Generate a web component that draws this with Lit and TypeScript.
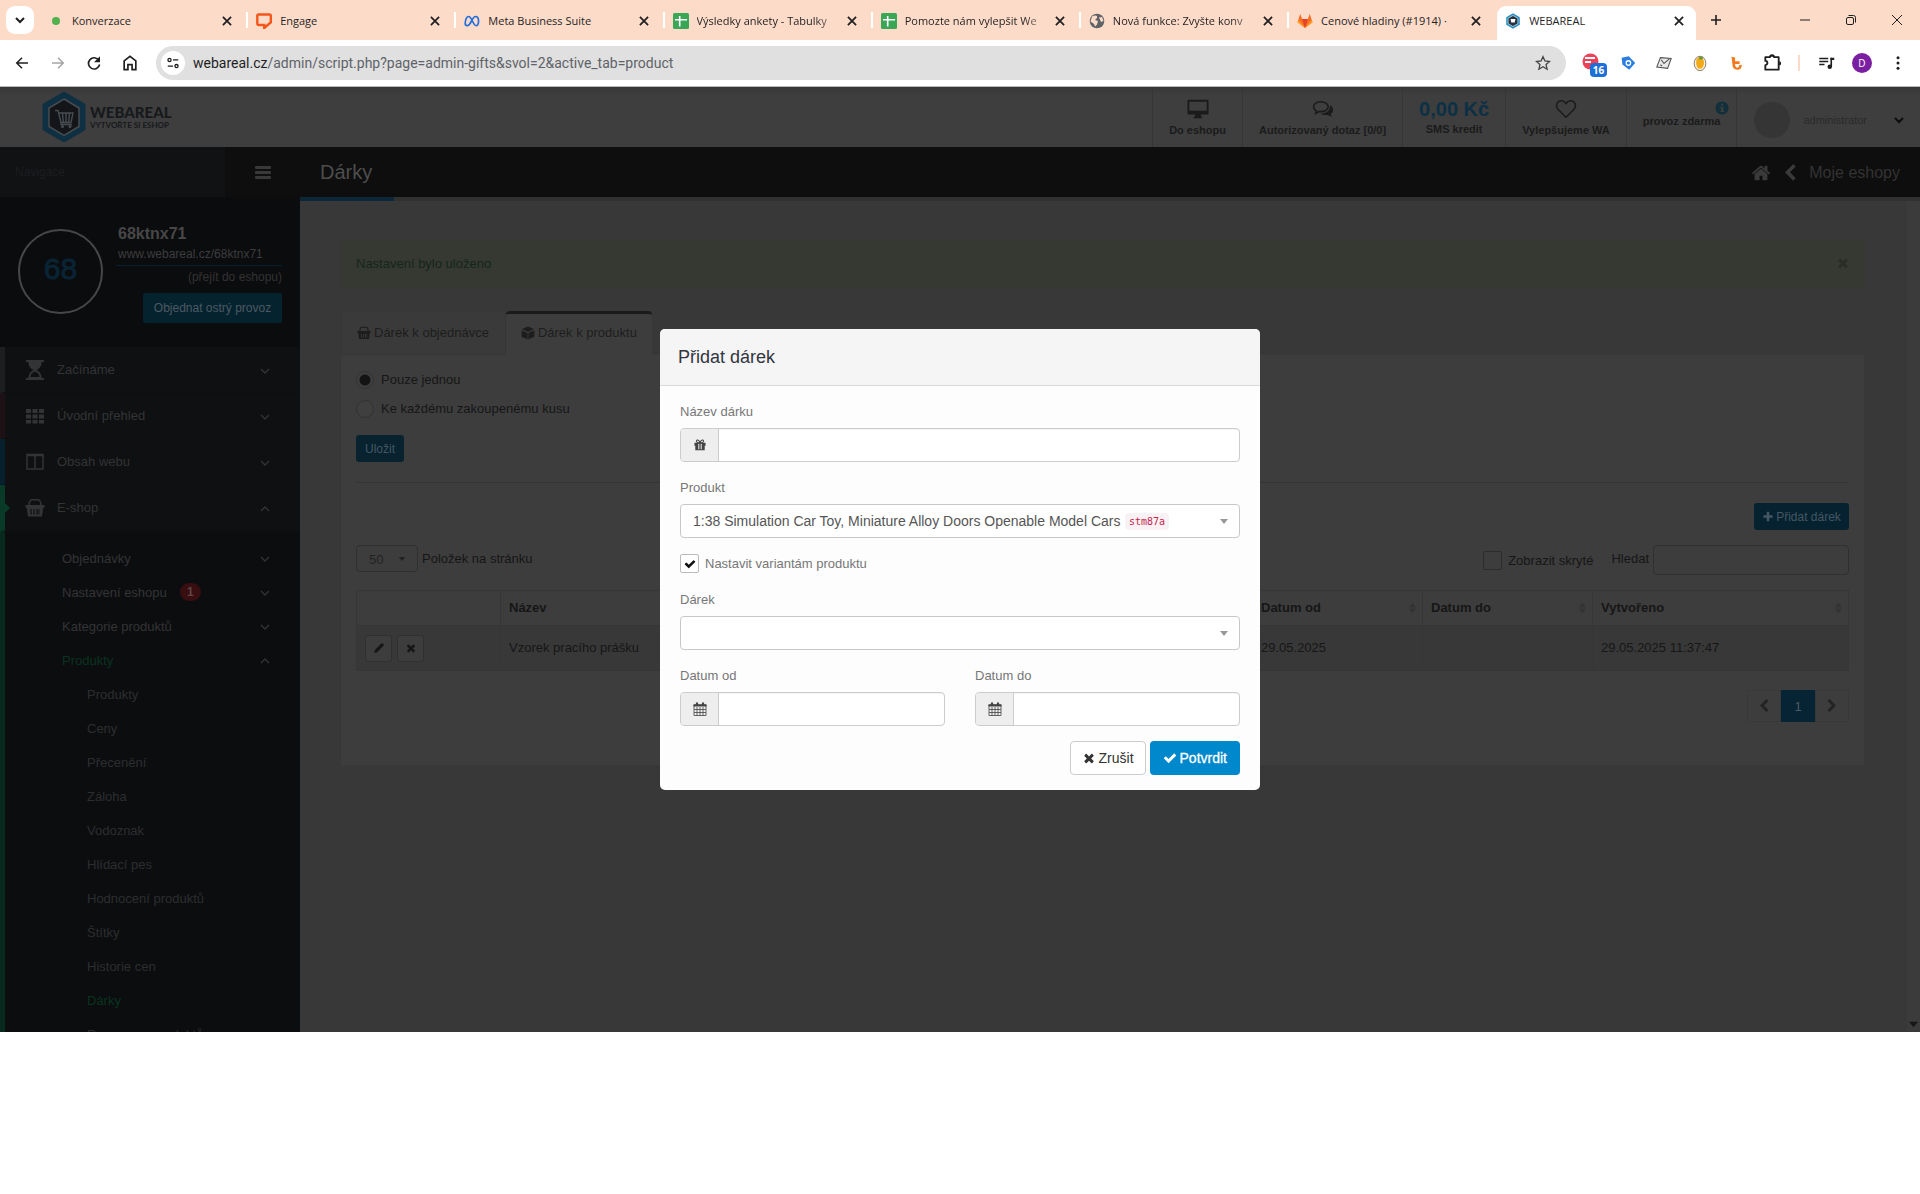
import { LitElement, html, css, svg, nothing, TemplateResult, SVGTemplateResult } from "lit";
import { customElement } from "lit/decorators.js";
import { classMap } from "lit/directives/class-map.js";

type Glyph = { box: string; body: SVGTemplateResult };

const glyphs: Record<string, Glyph> = {
  check: { box: "0 0 1792 1792", body: svg`<path d="M1671 566q0 40-28 68l-724 724-136 136q-28 28-68 28t-68-28l-136-136-362-362q-28-28-28-68t28-68l136-136q28-28 68-28t68 28l294 295 656-657q28-28 68-28t68 28l136 136q28 28 28 68z"/>` },
  times: { box: "0 0 1792 1792", body: svg`<path d="M1490 1322q0 40-28 68l-136 136q-28 28-68 28t-68-28l-294-294-294 294q-28 28-68 28t-68-28l-136-136q-28-28-28-68t28-68l294-294-294-294q-28-28-28-68t28-68l136-136q28-28 68-28t68 28l294 294 294-294q28-28 68-28t68 28l136 136q28 28 28 68t-28 68l-294 294 294 294q28 28 28 68z"/>` },
  plus: { box: "0 0 1792 1792", body: svg`<path d="M1600 736v192q0 40-28 68t-68 28h-416v416q0 40-28 68t-68 28h-192q-40 0-68-28t-28-68v-416h-416q-40 0-68-28t-28-68v-192q0-40 28-68t68-28h416v-416q0-40 28-68t68-28h192q40 0 68 28t28 68v416h416q40 0 68 28t28 68z"/>` },
  home: { box: "0 0 1792 1792", body: svg`<path d="M1472 992v480q0 26-19 45t-45 19h-384v-384h-256v384h-384q-26 0-45-19t-19-45v-480q0-1 .5-3t.5-3l575-474 575 474q1 2 1 6zm223-69l-62 74q-8 9-21 11h-3q-13 0-21-7l-692-577-692 577q-12 8-24 7-13-2-21-11l-62-74q-8-10-7-23.5t11-21.5l719-599q32-26 76-26t76 26l244 204v-195q0-14 9-23t23-9h192q14 0 23 9t9 23v408l219 182q10 8 11 21.5t-7 23.5z"/>` },
  left: { box: "0 0 1792 1792", body: svg`<path d="M1427 301l-531 531 531 531q19 19 19 45t-19 45l-166 166q-19 19-45 19t-45-19l-742-742q-19-19-19-45t19-45l742-742q19-19 45-19t45 19l166 166q19 19 19 45t-19 45z"/>` },
  right: { box: "0 0 1792 1792", body: svg`<path transform="translate(1792 0) scale(-1 1)" d="M1427 301l-531 531 531 531q19 19 19 45t-19 45l-166 166q-19 19-45 19t-45-19l-742-742q-19-19-19-45t19-45l742-742q19-19 45-19t45 19l166 166q19 19 19 45t-19 45z"/>` },
  bars: { box: "0 0 16 16", body: svg`<rect y="2" width="16" height="3" rx="1"/><rect y="7" width="16" height="3" rx="1"/><rect y="12" width="16" height="3" rx="1"/>` },
  down: { box: "0 0 12 12", body: svg`<path d="M2 5l4 4 4-4" fill="none" stroke="currentColor" stroke-width="1.3"/>` },
  up: { box: "0 0 12 12", body: svg`<path d="M2 9l4-4 4 4" fill="none" stroke="currentColor" stroke-width="1.3"/>` },
  downBold: { box: "0 0 12 12", body: svg`<path d="M2 4l4 4 4-4" fill="none" stroke="currentColor" stroke-width="2"/>` },
  close: { box: "0 0 12 12", body: svg`<path d="M2.500 2.500l7 7M9.500 2.500l-7 7" fill="none" stroke="currentColor" stroke-width="1.500"/>` },
  closeThin: { box: "0 0 12 12", body: svg`<path d="M1 1l10 10M11 1L1 11" fill="none" stroke="currentColor" stroke-width="1"/>` },
  add: { box: "0 0 12 12", body: svg`<path d="M6 1v10M1 6h10" fill="none" stroke="currentColor" stroke-width="1.6"/>` },
  minimize: { box: "0 0 12 12", body: svg`<path d="M1 6h10" stroke="currentColor"/>` },
  restore: { box: "0 0 12 12", body: svg`<g fill="none" stroke="currentColor"><rect x="1.5" y="3.5" width="7" height="7" rx="1.5"/><path d="M3.5 1.5h5q2 0 2 2v5"/></g>` },
  back: { box: "0 0 24 24", body: svg`<path d="M20 12H5M12 5l-7 7 7 7" fill="none" stroke="currentColor" stroke-width="2"/>` },
  forward: { box: "0 0 24 24", body: svg`<path d="M4 12h15M12 5l7 7-7 7" fill="none" stroke="currentColor" stroke-width="2"/>` },
  reload: { box: "0 0 24 24", body: svg`<path d="M18.500 8.500A7.500 7.500 0 1 0 19.500 14" fill="none" stroke="currentColor" stroke-width="2.200"/><path d="M20 3v8h-8z"/>` },
  house: { box: "0 0 24 24", body: svg`<path d="M5 20V9.500L12 4l7 5.500V20h-4.500v-6h-5v6z" fill="none" stroke="currentColor" stroke-width="2"/>` },
  tune: { box: "0 0 16 16", body: svg`<g fill="none" stroke="currentColor" stroke-width="1.500"><circle cx="4" cy="4.500" r="1.800"/><path d="M8 4.500h6M2 11.500h6"/><circle cx="12" cy="11.500" r="1.800"/></g>` },
  star: { box: "0 0 24 24", body: svg`<path d="M12 2.500l2.900 6.500 7 .7-5.300 4.700 1.500 6.900-6.100-3.600-6.100 3.600 1.500-6.900L2.100 9.700l7-.7z" fill="none" stroke="currentColor" stroke-width="2"/>` },
  puzzle: { box: "0 0 24 24", body: svg`<path d="M4 5h5.500a2.500 2.500 0 0 1 5 0H20v15H4v-5.500a2.300 2.300 0 0 0 0-5z" fill="none" stroke="currentColor" stroke-width="2.200" stroke-linejoin="round"/><path d="M9.500 4.500a2.500 2.500 0 0 1 5 0zM20.500 10a2.500 2.500 0 0 1 0 5z"/>` },
  queue: { box: "0 0 24 24", body: svg`<path d="M3 6h12M3 10h12M3 14h7M19 5v12" stroke="currentColor" stroke-width="2.200"/><path d="M18 5h5v3h-5z"/><circle cx="17" cy="17" r="3"/>` },
  dots: { box: "0 0 24 24", body: svg`<circle cx="12" cy="5" r="2"/><circle cx="12" cy="12" r="2"/><circle cx="12" cy="19" r="2"/>` },
  monitor: { box: "0 0 24 24", body: svg`<path d="M2 2h20q1.500 0 1.500 1.500v13q0 1.500-1.500 1.500h-7l1 3h1v1H7v-1h1l1-3H2Q.5 18 .5 16.500v-13Q.5 2 2 2zM2.500 4v10h19V4z" fill-rule="evenodd"/>` },
  chats: { box: "0 0 24 24", body: svg`<path d="M9.500 4C5 4 1.800 6.300 1.800 9.600c0 2 1.200 3.600 3 4.600L4 16.800l3.800-2c6 .6 9.900-1.900 9.900-5.200C17.700 6.300 14 4 9.500 4z" fill="none" stroke="currentColor" stroke-width="1.700"/><path d="M19.500 7.500c4.500 2.500 4.500 7.800.8 10l1.700 3.300-5-2.300c-3.200.4-6-.3-7.500-1.700 6.500 0 11-3.500 10-9.300z"/>` },
  heart: { box: "0 0 24 24", body: svg`<path d="M12 21L3.500 12.500C-.5 8 3 2.500 7.500 3 10 3.300 12 6 12 6s2-2.700 4.500-3C21 2.500 24.500 8 20.500 12.500z" fill="none" stroke="currentColor" stroke-width="1.700"/>` },
  info: { box: "0 0 16 16", body: svg`<circle cx="8" cy="8" r="7.500"/><path d="M7 3h2.500v2H7zM6 6.500h3.500V11h1v1.500H6V11h1V8H6z" fill="#3e3e3e"/>` },
  hourglass: { box: "0 0 20 20", body: svg`<path d="M1 1h18M1 19h18" stroke="currentColor" stroke-width="1.800"/><path d="M3.500 2v2q1 4 5 6-4 2-5 6v2h13v-2q-1-4-5-6 4-2 5-6V2zM5.500 17q0-4 4.500-5.500Q14.500 13 14.500 17z" fill-rule="evenodd"/>` },
  grid: { box: "0 0 20 20", body: svg`<path d="M1 3h5v4H1zM7.500 3h5v4h-5zM14 3h5v4h-5zM1 8.500h5v4H1zM7.500 8.500h5v4h-5zM14 8.500h5v4h-5zM1 14h5v3.500H1zM7.500 14h5v3.500h-5zM14 14h5v3.500h-5z"/>` },
  columns: { box: "0 0 20 20", body: svg`<path d="M2 2.500h16v14.500H2zM10 3v14M2 3.500h16" fill="none" stroke="currentColor" stroke-width="1.500"/>` },
  basket: { box: "0 0 20 20", body: svg`<path d="M4 8q0-6 3-6.200h6Q16 2 16 8" fill="none" stroke="currentColor" stroke-width="1.600"/><path d="M.5 7h19v2.800h-1.200L17 18.500H3L1.700 9.800H.5zM5.500 11v5.500h1.200V11zm3 0v5.500h1.200V11zm3 0v5.500h1.200V11zm3 0h-1v5.500h1z" fill-rule="evenodd"/>` },
  cube: { box: "0 0 16 16", body: svg`<path d="M8 .5l7 3-7 3.300-7-3.300zM.8 5l6.700 3v7.500L.8 12.300zM15.200 5v7.300l-6.700 3.200V12L12 10.300V6.500z"/><path d="M8.500 8l5-2.300v5l-5 2.200z"/>` },
  pencil: { box: "0 0 16 16", body: svg`<path d="M1.500 14.500l1-4 8.500-8.500q1-1 2 0l1 1q1 1 0 2l-8.500 8.500z"/>` },
  gift: { box: "0 0 14 14", body: svg`<path d="M.5 4.500h13V8h-1v5h-11V8h-1zM5 5.500V12h1.200V5.500zM7.800 5.500V12H9V5.500z" fill-rule="evenodd"/><path d="M7 4.500Q5.500.5 3.500 1.300 2 2.500 4 4.300zM7 4.500Q8.500.5 10.500 1.300 12 2.500 10 4.300z" fill="none" stroke="currentColor" stroke-width="1.300"/>` },
  calendar: { box: "0 0 14 14", body: svg`<path d="M.5 2.200h13v2.300H.5z"/><path d="M1 3h12v10.500H1zM1 7.500h12M1 10.500h12M4 5v8.500M7 5v8.500M10 5v8.500" fill="none" stroke="currentColor" stroke-width=".8"/><rect x="3" y=".3" width="2" height="3.200" rx="1"/><rect x="9" y=".3" width="2" height="3.200" rx="1"/>` },
  caret: { box: "0 0 8 5", body: svg`<path d="M0 0h8L4 5z"/>` },
  sort: { box: "0 0 8 14", body: svg`<path d="M0 6l4-5 4 5zM0 8h8l-4 5z"/>` },
  dot: { box: "0 0 16 16", body: svg`<circle cx="8" cy="8" r="4" fill="#4fb04c"/>` },
  engage: { box: "0 0 16 16", body: svg`<path d="M2.500 1.500h11q1.300 0 1.300 1.500v6.500L10.500 13 8.200 15.300V12H2.800Q1.300 12 1.300 10.500V3q0-1.500 1.200-1.500z" fill="none" stroke="#f3571b" stroke-width="2.400"/>` },
  meta: { box: "0 0 16 16", body: svg`<path d="M1.200 10.500C1.200 6 3 3.500 4.700 3.500 7.800 3.500 9 12.700 12.300 12.700c3 0 3.300-9.200-.8-9.200C8 3.500 7 12.700 3.300 12.700c-1.300 0-2.100-.8-2.100-2.200z" fill="none" stroke="#1f6fe0" stroke-width="1.700"/>` },
  sheets: { box: "0 0 16 16", body: svg`<rect width="16" height="16" rx="1.500" fill="#3aa757"/><path d="M6.700 3v10.500M2 6.700h12" stroke="#fff" stroke-width="1.600"/>` },
  globe: { box: "0 0 16 16", body: svg`<circle cx="8" cy="8" r="7.300" fill="#5f6368"/><path d="M3 3.500Q6 2 8 3v2L6 7l3 1-1 3.500-2 2Q5 10 1.500 8.500zM10 4.500l3-.5 1.500 4-2.500 1z" fill="#fddbc9"/>` },
  gitlab: { box: "0 0 16 16", body: svg`<path d="M8 15L.5 9.300 3.200 1l2 5h5.600l2-5 2.700 8.300z" fill="#fc6d26"/><path d="M8 15L5.200 6h5.600z" fill="#e24329"/><path d="M8 15L.5 9.300l1-2.300zM8 15l7.500-5.700-1-2.300z" fill="#fca326"/>` },
  webareal: { box: "0 0 16 16", body: svg`<path d="M8 .3l6.800 3.900v7.600L8 15.700l-6.800-3.900V4.200z" fill="#2b8fc4"/><path d="M8 2.500l4.900 2.800v5.400L8 13.500l-4.900-2.800V5.300z" fill="#26323c" stroke="#d6eaf4" stroke-width=".7"/><path d="M5.500 6h5l-.8 3.500H6.300z" fill="#fff"/>` },
  block: { box: "0 0 20 20", body: svg`<circle cx="8.500" cy="8.500" r="8" fill="#ee4056"/><path d="M3 5h10M3 9h6" stroke="#fff" stroke-width="2"/>` },
  tag: { box: "0 0 20 20", body: svg`<path d="M2 3.500l9-2 8 8.500-7.500 8.500L3 12z" fill="#2b7de1"/><circle cx="10.500" cy="10" r="2.800" fill="none" stroke="#fff" stroke-width="1.600"/>` },
  envelope: { box: "0 0 20 20", body: svg`<path d="M6 4l12 1-4 11-12-1.500z" fill="#e9e9e9" stroke="#555" stroke-width="1.200"/><path d="M7 6.500l3 4 6-5M6 12l2 1.500" fill="none" stroke="#555" stroke-width="1.200"/>` },
  mango: { box: "0 0 20 20", body: svg`<ellipse cx="10" cy="10.500" rx="6.500" ry="8" fill="#f6efdf" stroke="#8a6d52"/><path d="M6 6q3-5 7-1 3 5 0 10-4 3-6 0-2-4-1-9z" fill="#f3aa18"/><path d="M9 3h4v3H9z" fill="#5b9d34"/>` },
  tool: { box: "0 0 20 20", body: svg`<path d="M5 3l4 1v4h5v3H9q0 4 2.500 4 2 0 2-2.500l3-.5q0 5.500-5 5.500-5.500 0-5.500-6z" fill="#f47a20"/>` },
};

const icon = (name: string, cls = ""): TemplateResult => {
  const g = glyphs[name];
  return html`<svg class="ico ${cls}" viewBox=${g.box} fill="currentColor" aria-hidden="true">${g.body}</svg>`;
};

const browserTabs = [
  { icon: "dot", title: "Konverzace" },
  { icon: "engage", title: "Engage" },
  { icon: "meta", title: "Meta Business Suite" },
  { icon: "sheets", title: "Výsledky ankety - Tabulky", fade: true },
  { icon: "sheets", title: "Pomozte nám vylepšit We", fade: true },
  { icon: "globe", title: "Nová funkce: Zvyšte konv", fade: true },
  { icon: "gitlab", title: "Cenové hladiny (#1914) ·" },
  { icon: "webareal", title: "WEBAREAL", active: true },
];

const mainMenu = [
  { icon: "hourglass", label: "Začínáme", tone: "grey" },
  { icon: "grid", label: "Úvodní přehled", tone: "red" },
  { icon: "columns", label: "Obsah webu", tone: "blue" },
  { icon: "basket", label: "E-shop", tone: "green", open: true },
];

const shopMenu = [
  { label: "Objednávky" },
  { label: "Nastavení eshopu", badge: "1" },
  { label: "Kategorie produktů" },
  { label: "Produkty", open: true },
];

const productMenu = ["Produkty", "Ceny", "Přecenění", "Záloha", "Vodoznak", "Hlídací pes", "Hodnocení produktů", "Štítky", "Historie cen", "Dárky", "Rezervace produktů"];

const shared = css`
  * { box-sizing: border-box; }
  :host { display: block; font-family: "Liberation Sans", Arial, sans-serif; font-size: 13px; }
  button, input, select { font: inherit; color: inherit; margin: 0; }
  button { border: 0; background: none; padding: 0; display: inline-flex; align-items: center; justify-content: center; }
  a { color: inherit; text-decoration: none; }
  .ico { display: block; width: 16px; height: 16px; flex: none; }
  .i12 { width: 12px; height: 12px; }
  .i14 { width: 14px; height: 14px; }
  .i18 { width: 18px; height: 18px; }
  .i20 { width: 20px; height: 20px; }
  .i22 { width: 22px; height: 22px; }
`;

@customElement("browser-chrome")
class BrowserChrome extends LitElement {
  static styles = [shared, css`
    :host { font-family: "Open Sans", "Noto Sans", sans-serif; font-size: 12px; color: #1f1f1f; }
    .strip { display: flex; height: 40px; padding: 6px 0 0 6px; background: #fddbc9; }
    .search { width: 28px; height: 28px; border-radius: 9px; background: #fff; margin-right: 6px; }
    .tabs { display: flex; flex: 0 1 1656px; min-width: 0; }
    .tab { flex: 208 1 0; min-width: 0; display: flex; align-items: center; gap: 8px; padding: 0 14px 5px 8px; height: 34px; position: relative; }
    .tab + .tab::before { content: ""; position: absolute; left: -2px; top: 6px; width: 2px; height: 16px; background: #fff; }
    .tab.active { flex-grow: 202; padding-right: 10px; background: #fff; border-radius: 9px 9px 0 0; }
    .tab.active::before { display: none; }
    .title { flex: 1; min-width: 0; font-size: 11px; line-height: 16px; white-space: nowrap; padding-top: 1px; }
    .fade { mask-image: linear-gradient(to right, #000 84%, #0005); }
    .plus { width: 32px; height: 28px; margin-left: 4px; }
    .controls { margin-left: auto; display: flex; }
    .controls button { width: 46px; height: 28px; }
    .bar { display: flex; align-items: center; height: 47px; padding: 0 10px; background: #fff; border-bottom: 1px solid #b9b9b9; }
    .nav { display: flex; gap: 12px; margin-right: 14px; }
    .nav button { width: 24px; height: 24px; }
    .dim { color: #a5a5a5; }
    .omni { flex: 1; display: flex; align-items: center; height: 34px; border-radius: 17px; background: #e0e0e0; padding: 0 15px 0 5px; gap: 8px; }
    .tune { width: 24px; height: 24px; border-radius: 50%; background: #fff; }
    .address { flex: 1; font-family: Roboto, "Open Sans", sans-serif; font-size: 14px; line-height: 20px; color: #5f6368; white-space: nowrap; }
    .address b { font-weight: 400; color: #1f1f1f; }
    .star { color: #444; }
    .exts { display: flex; align-items: center; gap: 12px; margin-left: 14px; }
    .exts button { width: 24px; height: 24px; position: relative; }
    .count { position: absolute; left: 10px; top: 12px; width: 17px; height: 14px; border-radius: 4px; background: #1d6fd8; color: #fff; font-size: 10px; font-weight: 700; line-height: 14px; text-align: center; }
    .sep { width: 2px; height: 16px; background: #fddbc9; margin: 0 2px; }
    .me { width: 20px; height: 20px; border-radius: 50%; background: #7b1fa2; color: #fff; font-size: 10px; line-height: 20px; }
  `];

  render() {
    return html`
      <div class="strip">
        <button class="search" aria-label="Hledat karty">${icon("downBold", "i12")}</button>
        <div class="tabs">
          ${browserTabs.map(t => html`
            <div class=${classMap({ tab: true, active: !!t.active })}>
              ${icon(t.icon)}<span class=${classMap({ title: true, fade: !!t.fade })}>${t.title}</span>
              <button aria-label="Zavřít kartu">${icon("close", "i14")}</button>
            </div>`)}
        </div>
        <button class="plus" aria-label="Nová karta">${icon("add", "i12")}</button>
        <div class="controls">
          <button aria-label="Minimalizovat">${icon("minimize", "i12")}</button>
          <button aria-label="Obnovit">${icon("restore", "i12")}</button>
          <button aria-label="Zavřít">${icon("closeThin", "i12")}</button>
        </div>
      </div>
      <div class="bar">
        <div class="nav">
          <button aria-label="Zpět">${icon("back", "i18")}</button>
          <button class="dim" aria-label="Vpřed">${icon("forward", "i18")}</button>
          <button aria-label="Znovu načíst">${icon("reload", "i18")}</button>
          <button aria-label="Domů">${icon("house", "i20")}</button>
        </div>
        <div class="omni">
          <button class="tune" aria-label="Informace o webu">${icon("tune", "i14")}</button>
          <span class="address"><b>webareal.cz</b>/admin/script.php?page=admin-gifts&amp;svol=2&amp;active_tab=product</span>
          <button class="star" aria-label="Přidat záložku">${icon("star")}</button>
        </div>
        <div class="exts">
          <button aria-label="Blokování">${icon("block", "i20")}<span class="count">16</span></button>
          <button aria-label="Štítek">${icon("tag")}</button>
          <button aria-label="Pošta">${icon("envelope", "i18")}</button>
          <button aria-label="Mango">${icon("mango", "i18")}</button>
          <button aria-label="Nástroj">${icon("tool", "i18")}</button>
          <button aria-label="Rozšíření">${icon("puzzle", "i20")}</button>
          <span class="sep"></span>
          <button aria-label="Média">${icon("queue", "i18")}</button>
          <button aria-label="Profil"><span class="me">D</span></button>
          <button aria-label="Nabídka">${icon("dots", "i18")}</button>
        </div>
      </div>`;
  }
}

@customElement("shop-header")
class ShopHeader extends LitElement {
  static styles = [shared, css`
    header { display: flex; height: 60px; background: linear-gradient(#373737, #3e3e3e 8px); color: #161616; padding-left: 41px; }
    .logo { display: flex; align-items: center; gap: 3px; }
    .hex { width: 46px; height: 52px; }
    .brand { display: flex; flex-direction: column; font-family: Lato, sans-serif; color: #17191c; font-weight: 900; }
    .name { font-size: 15px; line-height: 16px; }
    .claim { font-size: 8px; line-height: 10px; font-weight: 700; }
    .cells { margin-left: auto; display: flex; font-size: 11px; font-weight: 700; color: #1b1b1b; }
    .cell { display: flex; flex-direction: column; align-items: center; justify-content: center; gap: 3px; padding: 1px 16px 0; border-left: 1px solid #363636; line-height: 14px; }
    .cell.wide { padding: 0 16px; gap: 2px; }
    .money { font-size: 20px; line-height: 22px; color: #0c3045; }
    .free { position: relative; padding-top: 7px; }
    .free .ico { position: absolute; right: 7px; top: 14px; color: #12303c; }
    .user { display: flex; align-items: center; gap: 13px; padding: 5px 15px 0 17px; border-left: 1px solid #363636; font-weight: 400; color: #2a2a2a; }
    .avatar { width: 36px; height: 36px; border-radius: 50%; background: #353535; }
    .user .ico { margin-left: 13px; color: #0c0c0c; }
  `];

  render() {
    return html`
      <header>
        <a class="logo" href="#">
          <svg class="hex" viewBox="0 0 46 52" aria-hidden="true">
            <path d="M23 1.500l20.500 12v25L23 50.500 2.500 38.500v-25z" fill="#0e3042" stroke="#0e3042" stroke-width="2" stroke-linejoin="round"/>
            <path d="M23 8l15 9v18.500L23 44.500 8 35.500V17z" fill="#131518" stroke="#484c50" stroke-width="1.500"/>
            <g fill="none" stroke="#484c50" stroke-width="1.400"><path d="M14 19.500h3l3 12h10l2-9.500H18M21.500 22l.8 9M25 22v9M28.500 22l-.8 9M20 31.500v2h11"/></g>
            <circle cx="21.500" cy="35.500" r="1.500" fill="#484c50"/><circle cx="29" cy="35.500" r="1.500" fill="#484c50"/>
          </svg>
          <span class="brand"><span class="name">WEBAREAL</span><span class="claim">VYTVOŘTE SI ESHOP</span></span>
        </a>
        <nav class="cells">
          <a class="cell" href="#">${icon("monitor", "i22")}Do eshopu</a>
          <a class="cell" href="#">${icon("chats", "i22")}Autorizovaný dotaz [0/0]</a>
          <a class="cell wide" href="#"><span class="money">0,00 Kč</span>SMS kredit</a>
          <a class="cell" href="#">${icon("heart", "i22")}Vylepšujeme WA</a>
          <a class="cell free" href="#">provoz zdarma${icon("info", "i14")}</a>
          <a class="user" href="#"><span class="avatar"></span>administrator${icon("downBold", "i12")}</a>
        </nav>
      </header>`;
  }
}

@customElement("shop-sidebar")
class ShopSidebar extends LitElement {
  static styles = [shared, css`
    :host { background: #0f1012; color: #333435; overflow: hidden; }
    .top { display: flex; height: 50px; background: #111214; }
    .top span { flex: 1; padding: 18px 15px 0; font-size: 12px; line-height: 14px; color: #1c1e20; }
    .top button { width: 75px; background: #0e0e0f; color: #393939; }
    .profile { display: flex; justify-content: space-between; padding: 27px 18px 24px; height: 150px; background: #0b0c0e; }
    .ring { width: 85px; height: 85px; margin-top: 5px; border: 2px solid #474747; border-radius: 50%; color: #092435; font-size: 30px; line-height: 76px; text-align: center; -webkit-text-stroke: 1px #092435; }
    .who { display: flex; flex-direction: column; width: 166px; color: #3d3d3d; font-size: 12px; margin-top: 1px; }
    .who strong { font-size: 16px; line-height: 18px; color: #474747; margin-left: 2px; }
    .who a { padding: 4px 0 4px 2px; line-height: 14px; border-bottom: 1px solid #06202d; }
    .who small { font-size: 12px; line-height: 14px; text-align: right; padding: 4px 0 9px; color: #333; }
    .who button { align-self: flex-end; width: 139px; height: 30px; flex: none; border-radius: 2px; background: #05222f; color: #4c5a62; }
    ul { list-style: none; margin: 0; padding: 0; }
    .main > li { height: 46px; display: flex; align-items: center; padding: 0 29px 0 20px; border-left: 5px solid; border-bottom: 1px solid #0d0e10; position: relative; }
    .main > li span { flex: 1; padding-left: 12px; line-height: 16px; }
    .main .grey { border-left-color: #1c1e20; }
    .main .red { border-left-color: #1e1115; }
    .main .blue { border-left-color: #07202d; }
    .main .green { border-left-color: #093a27; height: 47px; }
    .green::before { content: ""; position: absolute; left: 0; top: 18px; border: 5px solid transparent; border-left-color: #093a27; }
    .shop { padding-top: 9px; border-left: 5px solid #08291d; background: #0c0d0f; }
    .shop li { display: flex; align-items: center; height: 34px; padding: 0 29px 0 57px; }
    .shop .leaf { padding-left: 82px; color: #2c2d2f; }
    .shop .ico { margin-left: auto; }
    .badge { margin-left: 13px; width: 21px; height: 18px; border-radius: 9px; background: #390e10; color: #5c4647; font-size: 12px; font-weight: 700; line-height: 18px; text-align: center; }
    .shop .on { color: #09331f; }
  `];

  render() {
    return html`
      <div class="top"><span>Navigace</span><button aria-label="Nabídka">${icon("bars")}</button></div>
      <div class="profile">
        <div class="ring">68</div>
        <div class="who">
          <strong>68ktnx71</strong>
          <a href="#">www.webareal.cz/68ktnx71</a>
          <small>(přejít do eshopu)</small>
          <button>Objednat ostrý provoz</button>
        </div>
      </div>
      <ul class="main">
        ${mainMenu.map(m => html`<li class=${m.tone}>${icon(m.icon, "i20")}<span>${m.label}</span>${icon(m.open ? "up" : "down", "i12")}</li>`)}
      </ul>
      <ul class="shop">
        ${shopMenu.map(m => html`<li><span class=${m.open ? "on" : ""}>${m.label}</span>${m.badge ? html`<b class="badge">${m.badge}</b>` : nothing}${icon(m.open ? "up" : "down", "i12")}</li>`)}
        ${productMenu.map(p => html`<li class="leaf"><a class=${p === "Dárky" ? "on" : ""} href="#">${p}</a></li>`)}
      </ul>`;
  }
}

@customElement("gift-list")
class GiftList extends LitElement {
  static styles = [shared, css`
    :host { background: #383838; color: #161616; overflow: hidden; }
    .title { display: flex; align-items: center; height: 50px; padding: 0 20px; background: #0e0e0e; color: #404040; }
    h1 { margin: 0; font-size: 20px; font-weight: 400; line-height: 24px; color: #4d4d4d; }
    .crumbs { margin-left: auto; display: flex; align-items: center; gap: 10px; padding-top: 2px; font-size: 16px; color: #333; }
    .crumbs .ico { color: #3a3a3a; }
    .progress { height: 4px; background: #313131; }
    .progress i { display: block; width: 94px; height: 4px; background: #0c2838; }
    .body { display: flex; min-height: 830px; }
    .content { flex: 1; min-width: 0; padding: 39px 42px 0 41px; }
    .alert { display: flex; align-items: center; justify-content: space-between; height: 48px; padding: 0 15px 2px; background: #363932; color: #142619; }
    .alert button { color: #2a2c28; }
    .tabs { display: flex; align-items: flex-end; margin-top: 23px; }
    .tabs button { gap: 3px; height: 43px; padding: 0 16px 2px 15px; background: #3a3a3a; border: 1px solid #353535; border-top-color: #393939; color: #1d1d1d; }
    .tabs button.on { height: 44px; border: 0; border-top: 3px solid #1a1a1a; border-radius: 4px 4px 0 0; background: #3d3d3d; padding: 0 15px 4px; }
    .panel { background: #3d3d3d; height: 410px; padding: 10px 15px 0; border-right: 1px solid #393939; }
    .radio { display: flex; align-items: center; gap: 7px; height: 29px; }
    .radio input { appearance: none; width: 18px; height: 18px; border: 1px solid #323232; border-radius: 50%; background: #3f3f3f; }
    .radio input:checked { background: radial-gradient(circle, #141414 5px, #3f3f3f 6px); }
    .blue { background: #08222f; color: #445762; height: 27px; border-radius: 3px; font-size: 12px; }
    .save { width: 48px; margin-top: 12px; }
    hr { border: 0; border-top: 1px solid #353535; margin: 20px 0; }
    .end { display: flex; justify-content: flex-end; }
    .add { width: 95px; gap: 2px; background: #062230; }
    .tools { display: flex; align-items: flex-start; height: 30px; margin-top: 15px; line-height: 27px; }
    .size { position: relative; color: #222; margin-right: 4px; }
    .size select, .find input { appearance: none; background: #3d3d3d; border: 1px solid #303030; border-radius: 4px; }
    .size select { width: 62px; height: 27px; padding: 0 12px; display: block; }
    .size .ico { position: absolute; right: 12px; top: 12px; width: 8px; height: 4px; }
    .right { margin-left: auto; display: flex; }
    .box { display: flex; align-items: center; gap: 6px; height: 30px; margin-right: 18px; }
    .box input { appearance: none; width: 19px; height: 19px; border: 1px solid #2c2c2c; border-radius: 2px; }
    .find { display: flex; gap: 4px; }
    .find input { width: 196px; height: 30px; }
    table { width: 100%; margin-top: 15px; border-collapse: collapse; table-layout: fixed; line-height: 16px; }
    th, td { border: 1px solid #363636; text-align: left; padding: 0 8px; }
    th { height: 35px; }
    td { height: 45px; background: #383838; }
    .c0 { width: 144px; } .c2 { width: 170px; } .c3 { width: 170px; } .c4 { width: 256px; }
    .head { display: flex; align-items: center; justify-content: space-between; }
    .head .ico { width: 7px; height: 12px; color: #323232; margin-right: -2px; }
    .acts { display: flex; gap: 5px; }
    .acts button { width: 27px; height: 27px; border: 1px solid #303030; border-radius: 3px; background: #3d3d3d; }
    .pages { margin-top: 19px; }
    .pages button { width: 34px; height: 32px; border: 1px solid #383838; color: #232323; }
    .pages .cur { background: #062433; border: 0; color: #4c5a62; }
    .pages .ico { width: 14px; height: 14px; }
    .scroll { width: 13px; background: #3b3b3b; color: #161616; display: flex; align-items: flex-end; justify-content: center; padding-bottom: 3px; }
    .scroll .ico { width: 9px; height: 7px; }
  `];

  render() {
    return html`
      <div class="title"><h1>Dárky</h1>
        <nav class="crumbs"><a href="#" aria-label="Domů">${icon("home", "i20")}</a>${icon("left", "i18")}<a href="#">Moje eshopy</a></nav>
      </div>
      <div class="progress"><i></i></div>
      <div class="body">
        <div class="content">
          <div class="alert">Nastavení bylo uloženo<button aria-label="Zavřít">${icon("times", "i14")}</button></div>
          <div class="tabs">
            <button>${icon("basket", "i14")}Dárek k objednávce</button>
            <button class="on">${icon("cube", "i14")}Dárek k produktu</button>
          </div>
          <div class="panel">
            <label class="radio"><input type="radio" name="mode" checked>Pouze jednou</label>
            <label class="radio"><input type="radio" name="mode">Ke každému zakoupenému kusu</label>
            <button class="blue save">Uložit</button>
            <hr>
            <div class="end"><button class="blue add">${icon("plus", "i12")}Přidat dárek</button></div>
            <div class="tools">
              <span class="size"><select id="size" aria-label="Počet položek"><option>50</option></select>${icon("caret")}</span>
              <label for="size">Položek na stránku</label>
              <div class="right">
                <label class="box"><input type="checkbox">Zobrazit skryté</label>
                <label class="find">Hledat<input type="text"></label>
              </div>
            </div>
            <table>
              <thead><tr>
                <th class="c0"></th><th>Název</th>
                <th class="c2"><span class="head">Datum od${icon("sort")}</span></th>
                <th class="c3"><span class="head">Datum do${icon("sort")}</span></th>
                <th class="c4"><span class="head">Vytvořeno${icon("sort")}</span></th>
              </tr></thead>
              <tbody><tr>
                <td><div class="acts"><button aria-label="Upravit">${icon("pencil", "i12")}</button><button aria-label="Smazat">${icon("times", "i12")}</button></div></td>
                <td>Vzorek pracího prášku</td><td>29.05.2025</td><td></td><td>29.05.2025 11:37:47</td>
              </tr></tbody>
            </table>
            <div class="end pages">
              <button aria-label="Předchozí">${icon("left")}</button><button class="cur">1</button><button aria-label="Další">${icon("right")}</button>
            </div>
          </div>
        </div>
        <div class="scroll">${icon("caret")}</div>
      </div>`;
  }
}

@customElement("gift-dialog")
class GiftDialog extends LitElement {
  static styles = [shared, css`
    :host { background: #fdfdfd; border-radius: 5px; overflow: hidden; color: #777; }
    h2 { margin: 0; height: 57px; padding: 0 18px; background: #f5f5f5; border-bottom: 1px solid #d9d9d9; font-size: 18px; font-weight: 400; line-height: 56px; color: #33353f; }
    form { padding: 16px 20px 15px; display: grid; grid-template-columns: 1fr 1fr; column-gap: 30px; }
    .full { grid-column: 1 / -1; }
    .field { display: grid; gap: 6px; margin-bottom: 16px; }
    .field > label { line-height: 20px; }
    .group { display: flex; height: 34px; border: 1px solid #ccc; border-radius: 4px; background: #fff; overflow: hidden; box-shadow: inset 0 1px 1px #0000000d; }
    .addon { width: 38px; display: flex; align-items: center; justify-content: center; background: #eee; border-right: 1px solid #ccc; color: #444; }
    .group input { flex: 1; min-width: 0; border: 0; outline: 0; background: none; padding: 0 12px; }
    .pick { position: relative; }
    .pick select { appearance: none; display: block; width: 100%; height: 34px; border: 1px solid #c8c8c8; border-radius: 4px; background: #fff; padding: 0 12px; font-size: 14px; color: #555; }
    .pick .ico { position: absolute; right: 12px; top: 15px; width: 8px; height: 5px; color: #999; }
    code { position: absolute; left: 445px; top: 9px; padding: 0 4px; border-radius: 4px; background: #f9f2f4; color: #c7254e; font: 10px/17px "DejaVu Sans Mono", monospace; }
    .tick { display: flex; align-items: center; gap: 6px; height: 20px; margin: -1px 0 17px; }
    .tick span { position: relative; display: flex; }
    .tick input { appearance: none; width: 19px; height: 19px; border: 1px solid #bbb; border-radius: 2px; background: #fff; }
    .tick .ico { position: absolute; left: 4px; top: 4px; color: #111; }
    .foot { display: flex; justify-content: flex-end; gap: 4px; margin-top: -1px; }
    .foot button { height: 34px; gap: 3px; border-radius: 4px; font-size: 14px; padding: 0 11px; }
    .no { border: 1px solid #ccc; background: #fff; color: #333; }
    .foot .yes { background: #0088cc; color: #fff; padding: 0 13px; -webkit-text-stroke: 0.3px #fff; }
  `];

  render() {
    return html`
      <h2>Přidat dárek</h2>
      <form @submit=${(e: Event) => e.preventDefault()}>
        <div class="field full"><label for="name">Název dárku</label><div class="group"><span class="addon">${icon("gift", "i12")}</span><input id="name" type="text"></div></div>
        <div class="field full"><label for="product">Produkt</label><div class="pick"><select id="product"><option>1:38 Simulation Car Toy, Miniature Alloy Doors Openable Model Cars</option></select><code>stm87a</code>${icon("caret")}</div></div>
        <label class="tick full"><span><input type="checkbox" checked>${icon("check", "i12")}</span>Nastavit variantám produktu</label>
        <div class="field full"><label for="gift">Dárek</label><div class="pick"><select id="gift"><option></option></select>${icon("caret")}</div></div>
        <div class="field"><label for="from">Datum od</label><div class="group"><span class="addon">${icon("calendar", "i14")}</span><input id="from" type="text"></div></div>
        <div class="field"><label for="to">Datum do</label><div class="group"><span class="addon">${icon("calendar", "i14")}</span><input id="to" type="text"></div></div>
        <div class="foot full">
          <button class="no" type="button">${icon("times", "i14")}Zrušit</button>
          <button class="yes">${icon("check", "i14")}Potvrdit</button>
        </div>
      </form>`;
  }
}

@customElement("app-root")
class AppRoot extends LitElement {
  static styles = css`
    :host { display: block; min-height: 100vh; background: #fff; }
    .window { display: flex; flex-direction: column; height: calc(100vh - 162px); overflow: hidden; position: relative; }
    .page { flex: 1; min-height: 0; display: grid; grid-template-columns: 300px minmax(0, 1fr); }
    .dialog { position: absolute; left: 50%; top: 329px; width: 600px; transform: translateX(-50%); }
  `;

  render() {
    return html`
      <div class="window">
        <browser-chrome></browser-chrome>
        <shop-header></shop-header>
        <div class="page"><shop-sidebar></shop-sidebar><gift-list></gift-list></div>
        <gift-dialog class="dialog" role="dialog" aria-label="Přidat dárek"></gift-dialog>
      </div>`;
  }
}
